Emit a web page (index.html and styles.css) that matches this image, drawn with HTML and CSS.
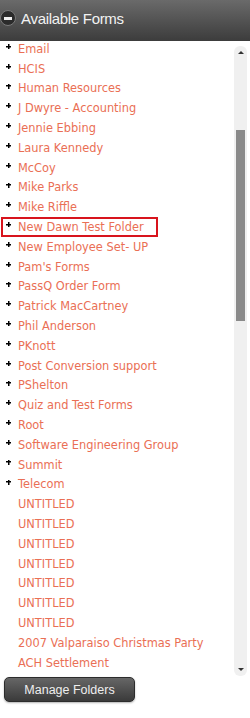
FILE: index.html
```html
<!DOCTYPE html>
<html lang="en">

<head>
  <meta charset="UTF-8" />
  <title>Available Forms</title>
  <link rel="stylesheet" href="styles.css">
</head>

<body>
  <div class="panel">
    <div class="panel-header">
      <span class="collapse-icon"><span class="minus"></span></span>
      <span class="panel-title">Available Forms</span>
    </div>

    <div class="panel-body">
      <ul class="folder-list">
        <li class="folder"><span class="plus"></span>Email</li>
        <li class="folder"><span class="plus"></span>HCIS</li>
        <li class="folder"><span class="plus"></span>Human Resources</li>
        <li class="folder"><span class="plus"></span>J Dwyre - Accounting</li>
        <li class="folder"><span class="plus"></span>Jennie Ebbing</li>
        <li class="folder"><span class="plus"></span>Laura Kennedy</li>
        <li class="folder"><span class="plus"></span>McCoy</li>
        <li class="folder"><span class="plus"></span>Mike Parks</li>
        <li class="folder"><span class="plus"></span>Mike Riffle</li>
        <li class="folder selected"><span class="plus"></span>New Dawn Test Folder</li>
        <li class="folder"><span class="plus"></span>New Employee Set- UP</li>
        <li class="folder"><span class="plus"></span>Pam's Forms</li>
        <li class="folder"><span class="plus"></span>PassQ Order Form</li>
        <li class="folder"><span class="plus"></span>Patrick MacCartney</li>
        <li class="folder"><span class="plus"></span>Phil Anderson</li>
        <li class="folder"><span class="plus"></span>PKnott</li>
        <li class="folder"><span class="plus"></span>Post Conversion support</li>
        <li class="folder"><span class="plus"></span>PShelton</li>
        <li class="folder"><span class="plus"></span>Quiz and Test Forms</li>
        <li class="folder"><span class="plus"></span>Root</li>
        <li class="folder"><span class="plus"></span>Software Engineering Group</li>
        <li class="folder"><span class="plus"></span>Summit</li>
        <li class="folder"><span class="plus"></span>Telecom</li>
        <li class="form">UNTITLED</li>
        <li class="form">UNTITLED</li>
        <li class="form">UNTITLED</li>
        <li class="form">UNTITLED</li>
        <li class="form">UNTITLED</li>
        <li class="form">UNTITLED</li>
        <li class="form">UNTITLED</li>
        <li class="form">2007 Valparaiso Christmas Party</li>
        <li class="form">ACH Settlement</li>
      </ul>

      <div class="scrollbar">
        <span class="arrow up"></span>
        <div class="track">
          <div class="thumb"></div>
        </div>
        <span class="arrow down"></span>
      </div>
    </div>

    <div class="panel-footer">
      <button type="button" class="manage-btn">Manage Folders</button>
    </div>
  </div>
</body>

</html>
```

FILE: styles.css
```css
* {
  box-sizing: border-box;
}

html,
body {
  margin: 0;
  padding: 0;
  background: #fff;
  font-family: "DejaVu Sans", Verdana, sans-serif;
}

.panel {
  width: 250px;
  height: 718px;
  display: flex;
  flex-direction: column;
}

.panel-header {
  height: 41px;
  display: flex;
  align-items: center;
  gap: 5px;
  padding: 0 0 5px 0;
  background: linear-gradient(#6a6a6a, #3c3c3c);
}

.collapse-icon {
  flex: none;
  width: 16px;
  height: 16px;
  border-radius: 50%;
  background: #2b2b2b;
  border: 1px solid #7a7a7a;
  display: flex;
  align-items: center;
  justify-content: center;
}

.minus {
  width: 8px;
  height: 3px;
  background: #f0f0f0;
}

.panel-title {
  font-family: "Liberation Sans", Arial, sans-serif;
  font-size: 15px;
  color: #f2f2f2;
  letter-spacing: -0.3px;
}

.panel-body {
  height: 635px;
  display: flex;
  overflow: hidden;
}

.folder-list {
  flex: 1;
  list-style: none;
  margin: -2px 0 0 0;
  padding: 0;
}

.folder-list li {
  height: 19.8px;
  display: flex;
  align-items: center;
  padding-left: 18px;
  font-size: 11.4px;
  color: #ea6f55;
  white-space: nowrap;
  position: relative;
}

.plus {
  position: absolute;
  left: 6px;
  top: 5px;
  width: 5px;
  height: 5px;
  background:
    linear-gradient(#000, #000) center / 5px 1.5px no-repeat,
    linear-gradient(#000, #000) center / 1.5px 5px no-repeat;
}

.folder.selected {
  margin-left: 1px;
  width: 157px;
  padding-left: 17px;
  outline: 2px solid #d8141d;
  outline-offset: -2px;
}

.folder.selected .plus {
  left: 5px;
}

.scrollbar {
  width: 13px;
  margin: 5px 3px 0 0;
  display: flex;
  flex-direction: column;
  align-items: center;
  background: #f0f0f0;
  border-radius: 6px;
}

.arrow {
  width: 0;
  height: 0;
  margin: 5px 0;
  border-left: 3px solid transparent;
  border-right: 3px solid transparent;
}

.arrow.up {
  border-bottom: 3px solid #333;
}

.arrow.down {
  border-top: 3px solid #333;
}

.track {
  flex: 1;
  width: 9px;
  padding-top: 71px;
}

.thumb {
  height: 191px;
  background: #8a8a8a;
}

.panel-footer {
  padding: 1px 0 0 4px;
}

.manage-btn {
  width: 131px;
  height: 25px;
  border: 1px solid #2c2c2c;
  border-radius: 5px;
  background: linear-gradient(#666, #3a3a3a);
  color: #eee;
  font-family: "Liberation Sans", Arial, sans-serif;
  font-size: 12.5px;
  padding: 0;
  box-shadow: 0 1px 2px rgba(0, 0, 0, 0.3);
}
```
